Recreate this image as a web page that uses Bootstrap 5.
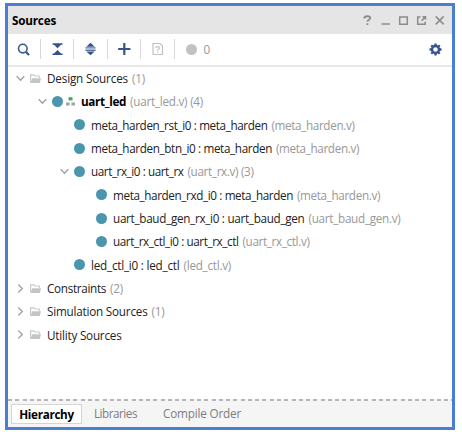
<!DOCTYPE html>
<html lang="en">
<head>
<meta charset="utf-8">
<meta name="viewport" content="width=device-width, initial-scale=1">
<title>Sources</title>
<link href="https://cdn.jsdelivr.net/npm/bootstrap@5.3.0/dist/css/bootstrap.min.css" rel="stylesheet">
<style>
body{font-family:"Open Sans","Noto Sans",sans-serif;font-size:11.7px;line-height:16px;color:#222;background:#fff;overflow:hidden}
svg{display:block;flex:none}
.panel{width:450px;height:427px;margin:3px 0 0 5px;border:3px solid #4b7ed0}
.titlebar{height:28px;background:#e5e5e5;padding:0 7px 0 4px}
.titlebar h1{font-size:11.7px;line-height:16px;color:#000}
.tools{height:33px;border-bottom:2px solid #e8e8e8;padding:0 10px 1px 9px}
.sep{width:1px;height:20px;background:#d8d8d8}
.tree{margin-top:-.6px}
.tree-row{height:23.33px;white-space:pre}
.lv1{padding-left:7.5px}.lv2{padding-left:29.5px}.lv3{padding-left:51.5px}.lv4{padding-left:73.5px}
.arrow{width:9px;height:9px;margin-right:5px}
.dot{width:11px;height:11px;border-radius:50%;background:#4a96ad;flex:none}
.dot-off{margin:0 7px 0 10.5px;background:#c2c2c2}
.gray{color:#989898}
.dash{height:2px;background:repeating-linear-gradient(90deg,#b5b5b5 0 4px,#f7f7f7 4px 7.27px)}
.tabs{height:26px;background:#f5f5f5;padding:3px 0 0 3px;color:#7d7d7d}
.tab-on{width:71px;height:20px;background:#fff;border:1px solid #d4d4d4;color:#000;line-height:18px}
.tab-off{margin:1px 0 0 12px}.tab-off + .tab-off{margin-left:26px}
</style>
</head>
<body>
<svg width="0" height="0" class="position-absolute" aria-hidden="true">
<symbol id="down" viewBox="0 0 9 9"><path d="M.7 2.3 4.5 6.3 8.3 2.3" fill="none" stroke="#a0a0a0" stroke-width="1.3"/></symbol>
<symbol id="right" viewBox="0 0 9 9"><path d="M2.3 .5 6.3 4.5 2.3 8.5" fill="none" stroke="#a0a0a0" stroke-width="1.3"/></symbol>
<symbol id="folder" viewBox="0 0 11 9"><path d="M.6 8.5V.8H4L5 2H9.3V4" fill="none" stroke="#c9c9c9" stroke-width="1.2"/><path d="M2.2 4.2H11L9.8 9H.6z" fill="#c4c4c4"/></symbol>
</svg>
<main class="panel d-flex flex-column">
<header class="titlebar d-flex align-items-center justify-content-between">
<h1 class="fw-bold mb-0" data-w="44">Sources</h1>
<svg width="82" height="14" viewBox="0 0 82 14" fill="none" stroke="#8c8c8c" stroke-width="1.5"><path d="M1.3 5.4C1.3 2.7 7.3 2.5 7.3 5 7.3 6.9 4.4 6.6 4.4 8.8M4.4 10.2v1.8" stroke-width="1.8"/><path d="M18.5 11H27"/><path d="M36.7 4H44.3V11.2H36.7z"/><path d="M57.5 4H54.7V11.3H62.2V8.7M59.5 3.8H62.5V6.6M58.6 7.8 62.3 4.1"/><path d="M72.7 3.4 80.7 11.4M80.7 3.4 72.7 11.4"/></svg>
</header>
<div class="tools d-flex align-items-center">
<svg width="13" height="13" viewBox="0 0 13 13" fill="none" stroke="#3c5a8d" stroke-width="1.6"><circle cx="5.8" cy="5.6" r="4.3"/><path d="M8.8 8.8 12 12" stroke-width="2.3"/></svg>
<span class="sep" style="margin-left:10px"></span>
<svg width="32" height="14" viewBox="0 0 32 14" fill="#35548a"><path d="M11.5 1.2h10v1.5h-10zM11.5 11.4h10v1.5h-10zM13 2.7h7l-3.5 3.5zM13 11.4h7L16.5 7.9z"/></svg>
<span class="sep"></span>
<svg width="33" height="14" viewBox="0 0 33 14"><path d="M16.5 .8 20.7 4.7h-8.4zM16.5 13.3 20.7 9.4h-8.4z" fill="#35548a"/><path d="M11.4 5.2h10.2v1.4H11.4zM11.4 7.6h10.2v1.4H11.4z" fill="#5c76a2"/></svg>
<span class="sep"></span>
<svg width="32" height="14" viewBox="0 0 32 14"><path d="M10.2 7H22.4M16.3 1V13" stroke="#35548a" stroke-width="2.2"/></svg>
<span class="sep"></span>
<svg width="33" height="14" viewBox="0 0 33 14" fill="none" stroke="#c2c2c2"><path d="M12 1.5H19L21.5 4V12.5H12z" stroke-width="1.2"/><path d="M14.7 6C14.7 4 18.5 4.3 18.5 6 18.5 7.2 16.6 7 16.6 8.7M16.6 9.7V11" stroke-width="1.2"/></svg>
<span class="sep"></span>
<span class="dot dot-off"></span><span class="gray">0</span>
<svg class="ms-auto" width="13" height="13" viewBox="-6.5 -6.5 13 13" fill="none" stroke="#35548a"><circle r="3.5" stroke-width="2.4"/><path d="M0-6V-4M0 6V4M-6 0H-4M6 0H4M-4.2-4.2-3-3M4.2 4.2 3 3M-4.2 4.2-3 3M4.2-4.2 3-3" stroke-width="2.3"/></svg>
</div>
<section class="tree flex-grow-1" id="tree"></section>
<div class="dash"></div>
<footer class="tabs d-flex">
<div class="tab-on fw-bold text-center"><span data-w="54.5">Hierarchy</span></div>
<span class="tab-off" data-w="43">Libraries</span>
<span class="tab-off" data-w="78">Compile Order</span>
</footer>
</main>
<script src="https://cdn.jsdelivr.net/npm/bootstrap@5.3.0/dist/js/bootstrap.bundle.min.js"></script>
<script>
// level, arrow, icon, name, name width, detail, detail width
const rows=[
[1,'down','folder','Design Sources',81,'(1)',13],
[2,'down','top','uart_led',45,'(uart_led.v) (4)',73],
[3,'','dot','meta_harden_rst_i0 : meta_harden',176.5,'(meta_harden.v)',83],
[3,'','dot','meta_harden_btn_i0 : meta_harden',181,'(meta_harden.v)',83],
[3,'down','dot','uart_rx_i0 : uart_rx',92.5,'(uart_rx.v) (3)',66],
[4,'','dot','meta_harden_rxd_i0 : meta_harden',180,'(meta_harden.v)',83],
[4,'','dot','uart_baud_gen_rx_i0 : uart_baud_gen',191.5,'(uart_baud_gen.v)',92],
[4,'','dot','uart_rx_ctl_i0 : uart_rx_ctl',125.5,'(uart_rx_ctl.v)',67],
[3,'','dot','led_ctl_i0 : led_ctl',88.5,'(led_ctl.v)',47.5],
[1,'right','folder','Constraints',59,'(2)',13],
[1,'right','folder','Simulation Sources',100.5,'(1)',13],
[1,'right','folder','Utility Sources',74.5,'',0]];
const topIcon='<span class="dot"></span><svg style="margin-left:3px" width="9" height="9" viewBox="0 0 9 9"><path d="M2.5 .2h4v3.2h-4z" fill="#36b157"/><path d="M0 5.5h3.6v3H0zM5.4 5.5H9v3H5.4z" fill="#a3a3a3"/></svg>';
document.getElementById('tree').innerHTML=rows.map(([l,a,i,n,w,d,dw])=>`<div class="tree-row d-flex align-items-center lv${l}"><svg class="arrow">${a?`<use href="#${a}"/>`:''}</svg>${i=='folder'?'<svg width="11" height="9"><use href="#folder"/></svg>':i=='top'?topIcon:'<span class="dot"></span>'}<span class="${i=='top'?'fw-bold text-black':''}" style="margin-left:6.5px" data-w="${w}">${n}</span>${d?`<span class="gray" style="margin-left:4px" data-w="${dw}">${d}</span>`:''}</div>`).join('');
document.querySelectorAll('[data-w]').forEach(e=>{e.style.letterSpacing='0px';const w=e.getBoundingClientRect().width,t=+e.dataset.w;e.style.letterSpacing=(t-w)/e.textContent.length+'px'});
</script>
</body>
</html>
